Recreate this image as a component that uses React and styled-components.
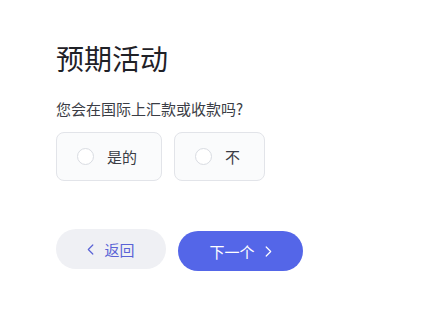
import styled, { createGlobalStyle } from 'styled-components';

const GlobalStyle = createGlobalStyle`
  html, body {
    margin: 0;
    padding: 0;
    background: #ffffff;
  }
  body {
    font-family: "Noto Sans CJK SC", "Noto Sans", sans-serif;
  }
`;

const Page = styled.div`
  width: 429px;
  height: 318px;
  box-sizing: border-box;
  padding: 38px 0 0 56px;
  display: flex;
  flex-direction: column;
`;

const Title = styled.h1`
  margin: 0;
  font-size: 28px;
  font-weight: 400;
  line-height: 40px;
  color: #1f2127;
`;

const Question = styled.p`
  margin: 21px 0 0;
  font-size: 15px;
  line-height: 20px;
  color: #3a3d45;
`;

const Options = styled.div`
  display: flex;
  gap: 12px;
  margin-top: 13px;
`;

const OptionCard = styled.label`
  box-sizing: border-box;
  height: 49px;
  display: flex;
  align-items: center;
  gap: 13px;
  padding: 0 24px 0 20px;
  background: #fafbfc;
  border: 1px solid #e2e4e9;
  border-radius: 8px;
  cursor: pointer;
`;

const Radio = styled.span`
  box-sizing: border-box;
  width: 17px;
  height: 17px;
  border-radius: 50%;
  border: 1px solid #d9dce2;
  background: #ffffff;
`;

const OptionText = styled.span`
  font-size: 15px;
  color: #3a3d45;
`;

const Actions = styled.div`
  display: flex;
  align-items: flex-start;
  gap: 12px;
  margin-top: 48px;
`;

const PillButton = styled.button`
  box-sizing: border-box;
  height: 40px;
  width: ${props => props.$width}px;
  margin-top: ${props => props.$offset || 0}px;
  display: flex;
  align-items: center;
  justify-content: center;
  gap: 10px;
  border: none;
  border-radius: 20px;
  font-family: inherit;
  font-size: 15px;
  background: ${props => (props.$primary ? '#5466e8' : '#eff0f4')};
  color: ${props => (props.$primary ? '#ffffff' : '#5a63d6')};
  cursor: pointer;
`;

const Chevron = ({ dir }) => (
  <svg width="7" height="11" viewBox="0 0 7 11" fill="none">
    <path
      d={dir === 'left' ? 'M5.8 1 L1.3 5.5 L5.8 10' : 'M1.2 1 L5.7 5.5 L1.2 10'}
      stroke="currentColor"
      strokeWidth="1.2"
      strokeLinecap="round"
      strokeLinejoin="round"
    />
  </svg>
);

const options = ['是的', '不'];

export default function App() {
  return (
    <>
      <GlobalStyle />
      <Page>
        <Title>预期活动</Title>
        <Question>您会在国际上汇款或收款吗?</Question>
        <Options>
          {options.map(opt => (
            <OptionCard key={opt}>
              <Radio />
              <OptionText>{opt}</OptionText>
            </OptionCard>
          ))}
        </Options>
        <Actions>
          <PillButton $width={110}>
            <Chevron dir="left" />
            返回
          </PillButton>
          <PillButton $primary $width={125} $offset={2}>
            下一个
            <Chevron dir="right" />
          </PillButton>
        </Actions>
      </Page>
    </>
  );
}
